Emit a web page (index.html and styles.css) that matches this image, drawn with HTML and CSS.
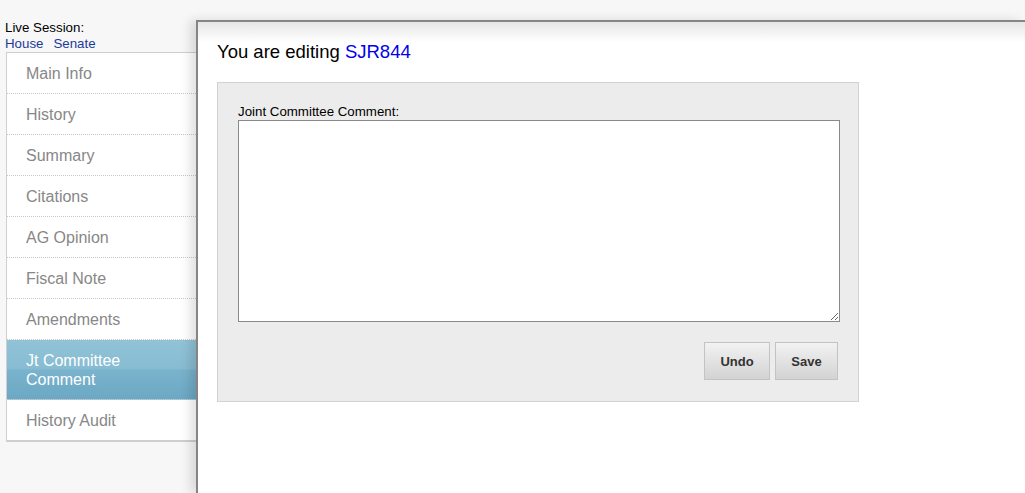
FILE: index.html
```html
<!DOCTYPE html>
<html>
<head>
<meta charset="utf-8">
<link rel="stylesheet" href="styles.css">
</head>
<body>
<div class="page">
  <aside class="sidebar">
    <div class="session">
      <div class="session-label">Live Session:</div>
      <div class="session-links"><a href="#">House</a><a href="#">Senate</a></div>
    </div>
    <ul class="nav">
      <li class="nav-item">Main Info</li>
      <li class="nav-item">History</li>
      <li class="nav-item">Summary</li>
      <li class="nav-item">Citations</li>
      <li class="nav-item">AG Opinion</li>
      <li class="nav-item">Fiscal Note</li>
      <li class="nav-item">Amendments</li>
      <li class="nav-item active">Jt Committee<br>Comment</li>
      <li class="nav-item last">History Audit</li>
    </ul>
  </aside>
  <main class="panel">
    <h1 class="title">You are editing <a href="#">SJR844</a></h1>
    <form class="form-box">
      <label class="field-label" for="comment">Joint Committee Comment:</label>
      <textarea id="comment" class="comment"></textarea>
      <div class="actions">
        <button type="button" class="btn undo">Undo</button>
        <button type="button" class="btn save">Save</button>
      </div>
    </form>
  </main>
</div>
</body>
</html>
```
FILE: styles.css
```css
html, body {
  margin: 0;
  padding: 0;
  height: 100%;
}
body {
  background: #f7f7f7;
  font-family: "Liberation Sans", Arial, sans-serif;
  overflow: hidden;
}
.page {
  display: flex;
  height: 493px;
}
.sidebar {
  width: 200px;
  flex: none;
  padding: 20px 0 0 5px;
  box-sizing: border-box;
  margin-right: -4px;
}
.session {
  font-size: 13.3px;
  line-height: 16px;
  color: #000;
}
.session-links a {
  color: #1b3a9c;
  text-decoration: none;
  margin-right: 10px;
}
.nav {
  list-style: none;
  margin: 0 0 0 1px;
  padding: 0;
  background: #fff;
  border: 1px solid #cfcfcf;
  border-right: none;
}
.nav-item {
  font-size: 16px;
  line-height: 19px;
  color: #878787;
  padding: 11px 0 10px 19px;
  border-bottom: 1px dotted #c8c8c8;
}
.nav-item.last {
  border-bottom: 1px solid #cfcfcf;
}
.nav-item.active {
  color: #fff;
  background: linear-gradient(#91c3d7 0%, #87bcd2 48%, #79b2cc 52%, #6ca8c4 100%);
}
.panel {
  flex: 1;
  position: relative;
  z-index: 1;
  margin-top: 20px;
  background: #fff linear-gradient(#e6e6e6, #ffffff 20px) no-repeat;
  border-top: 2px solid #858585;
  border-left: 2px solid #858585;
  box-shadow: -6px 0 10px rgba(0, 0, 0, 0.12);
  padding: 19px 0 0 19px;
}
.title {
  margin: 0 0 19px;
  font-size: 18.5px;
  line-height: 22px;
  font-weight: normal;
  color: #000;
}
.title a {
  color: #0000ee;
  text-decoration: none;
}
.form-box {
  width: 600px;
  background: #ececec;
  border: 1px solid #d2d2d2;
  padding: 21px 20px 21px 20px;
  display: flex;
  flex-direction: column;
}
.field-label {
  font-size: 13.3px;
  line-height: 16px;
  color: #000;
}
.comment {
  width: 602px;
  height: 202px;
  box-sizing: border-box;
  border: 1px solid #8a8a8a;
  background: #fff;
  margin: 0;
  resize: both;
}
.actions {
  display: flex;
  justify-content: flex-end;
  gap: 5px;
  margin-top: 20px;
}
.btn {
  height: 38px;
  font-family: "Liberation Sans", Arial, sans-serif;
  font-size: 13px;
  font-weight: bold;
  color: #333;
  background: linear-gradient(#f2f2f2, #d3d3d3);
  border: 1px solid #c3c3c3;
  border-radius: 0;
  padding: 0;
}
.undo { width: 66px; }
.save { width: 63px; }
```
